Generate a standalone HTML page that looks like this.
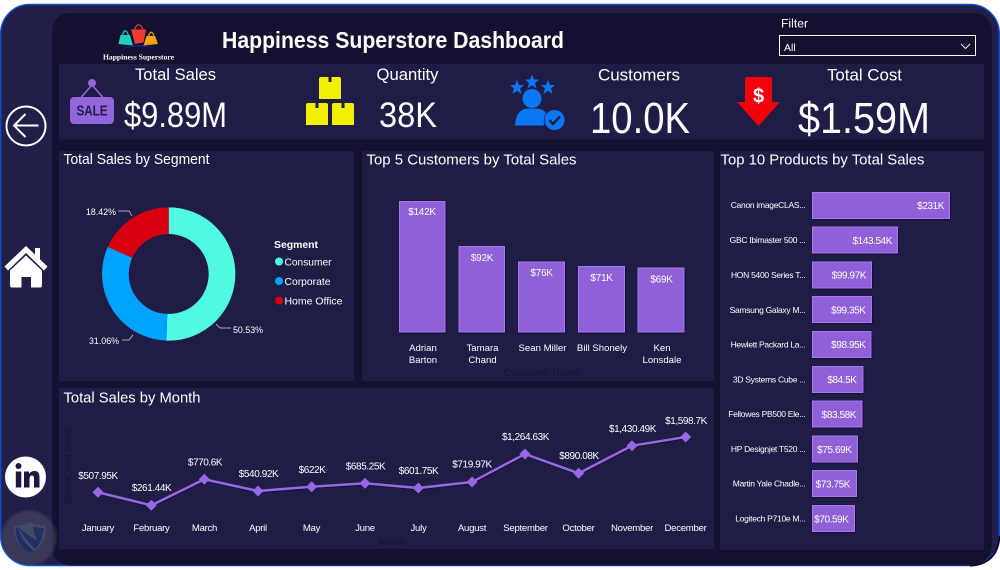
<!DOCTYPE html>
<html>
<head>
<meta charset="utf-8">
<title>Happiness Superstore Dashboard</title>
<style>
html,body{margin:0;padding:0;background:#fff;width:1000px;height:570px;overflow:hidden}
svg{display:block}
text{font-family:"Liberation Sans",sans-serif;fill:#fff}
.lb{font-size:9.5px}
.pl{font-size:8.5px;text-anchor:end;letter-spacing:-.28px}
.pv{font-size:10px;text-anchor:end;letter-spacing:-.42px}
.mv{font-size:10px;text-anchor:middle;letter-spacing:-.42px}
.mm{font-size:9.6px;text-anchor:middle;letter-spacing:-.28px}
.cv{font-size:9.6px;text-anchor:middle}
.cn{font-size:10px;text-anchor:middle;letter-spacing:-.3px}
.h{font-size:14.5px}
.kh{font-size:16.5px;text-anchor:middle}
.bar{fill:#9061d8;stroke:#a678f2;stroke-width:1}
</style>
</head>
<body>
<svg width="1000" height="570" viewBox="0 0 1000 570" xmlns="http://www.w3.org/2000/svg">
<defs>
<filter id="sh" x="-10%" y="-10%" width="120%" height="120%"><feDropShadow dx="0.5" dy="0.5" stdDeviation="0.6" flood-color="#07061c" flood-opacity="1"/></filter>
<filter id="bl" x="-20%" y="-20%" width="140%" height="140%"><feGaussianBlur stdDeviation="1.2"/></filter>
</defs>
<rect width="1000" height="570" fill="#fff"/>
<!-- frame -->
<rect x="0.7" y="4.5" width="998.6" height="561" rx="29" fill="#211e4a" stroke="#0a50cc" stroke-width="1.4"/>
<path d="M72 13H972Q992 13 992 33V540Q992 565.500 966 565.500H72Q52 565.500 52 545V33Q52 13 72 13Z" fill="#13112f"/>
<path d="M970 565.800Q998 564 999.600 536" fill="none" stroke="#050418" stroke-width="1.600"/>
<!-- panels -->
<rect x="59" y="64" width="925" height="75.500" fill="#1f1c46"/>
<rect x="59" y="151" width="295" height="230" rx="1" fill="#1f1c46"/>
<rect x="362" y="151" width="352" height="230" rx="1" fill="#1f1c46"/>
<rect x="720" y="151" width="264" height="399" rx="1" fill="#1f1c46"/>
<rect x="59" y="388" width="655" height="161" rx="1" fill="#1f1c46"/>

<!-- logo -->
<path d="M120.500 35H130L133 45.500L118.500 44Z" fill="#25cdbd"/>
<path d="M122.500 35Q125 26.500 128.500 35" fill="none" stroke="#25cdbd" stroke-width="1.200"/>
<path d="M131 29.500H146L143.500 42.500L135 44Z" fill="#ee3d2f"/>
<path d="M134.500 29.500Q138.500 20 143 29.500" fill="none" stroke="#ee3d2f" stroke-width="1.200"/>
<path d="M146.500 36H155L158 44L143.500 45.500Z" fill="#f5a30f"/>
<path d="M148.500 36Q151.500 28.500 154 36" fill="none" stroke="#f5a30f" stroke-width="1.200"/>
<path d="M121 49Q139 41.500 156 48.500Q139 44.500 121 49Z" fill="#152a8c"/>
<text x="103" y="59.500" textLength="71" lengthAdjust="spacingAndGlyphs" style="font-family:'Liberation Serif',serif;font-weight:bold;font-size:7.400px">Happiness Superstore</text>

<!-- title -->
<text x="222" y="48" textLength="342" lengthAdjust="spacingAndGlyphs" style="font-size:23px;font-weight:bold">Happiness Superstore Dashboard</text>

<!-- filter -->
<text x="781" y="27.500" textLength="27" lengthAdjust="spacingAndGlyphs" style="font-size:11.500px">Filter</text>
<rect x="779.500" y="35.500" width="196" height="20" fill="#13112f" stroke="#fff" stroke-width="1"/>
<text x="784" y="51" style="font-size:10.500px">All</text>
<path d="M961 44L965.500 48.500L970 44" fill="none" stroke="#fff" stroke-width="0.900"/>

<!-- KPI text -->
<text class="kh" x="175.500" y="80" textLength="81" lengthAdjust="spacingAndGlyphs">Total Sales</text>
<text x="124" y="127" textLength="103" lengthAdjust="spacingAndGlyphs" style="font-size:35px">$9.89M</text>
<text class="kh" x="407.500" y="80" textLength="62" lengthAdjust="spacingAndGlyphs">Quantity</text>
<text x="379" y="127" textLength="58" lengthAdjust="spacingAndGlyphs" style="font-size:35px">38K</text>
<text class="kh" x="639" y="80.500" textLength="82" lengthAdjust="spacingAndGlyphs">Customers</text>
<text x="590" y="133" textLength="100" lengthAdjust="spacingAndGlyphs" style="font-size:44px">10.0K</text>
<text class="kh" x="864.500" y="80.500" textLength="75" lengthAdjust="spacingAndGlyphs">Total Cost</text>
<text x="798" y="133" textLength="132" lengthAdjust="spacingAndGlyphs" style="font-size:44px">$1.59M</text>

<!-- SALE icon -->
<circle cx="92" cy="83" r="4" fill="#9366dc"/>
<path d="M92 85L80.500 98M92 85L103.500 98" stroke="#9366dc" stroke-width="1.600" fill="none"/>
<rect x="70" y="97" width="44" height="27" rx="4" fill="#9366dc"/>
<text x="92" y="115.500" text-anchor="middle" textLength="31" lengthAdjust="spacingAndGlyphs" style="font-size:14.500px;font-weight:bold;fill:#1f1c46">SALE</text>

<!-- boxes -->
<g fill="#f0f000">
<path d="M319 79Q319 77 321 77H328.500V82H331.500V77H339Q341 77 341 79V99H319Z"/>
<path d="M306 105Q306 103 308 103H315.500V108H318.500V103H326Q328 103 328 105V125H306Z"/>
<path d="M332 105Q332 103 334 103H341.500V108H344.500V103H352Q354 103 354 105V125H332Z"/>
</g>

<!-- customer icon -->
<g fill="#0a78f5">
<path d="M517 80L519 85H524L520 88.500L521.500 94L517 90.800L512.500 94L514 88.500L510 85H515Z"/>
<path d="M532 74.500L534 79.500H539L535 83L536.500 88.500L532 85.300L527.500 88.500L529 83L525 79.500H530Z"/>
<path d="M548 80L550 85H555L551 88.500L552.500 94L548 90.800L543.500 94L545 88.500L541 85H546Z"/>
<circle cx="532" cy="98.500" r="9.500"/>
<path d="M515 125.500Q516 109 528 108.500H536Q544 109 546 113Q543 118 544 125.500Z"/>
<circle cx="554.500" cy="120" r="10"/>
</g>
<path d="M549.500 120L553 124L560 116.500" fill="none" stroke="#1f1c46" stroke-width="2.400"/>

<!-- cost arrow -->
<path d="M745 79Q745 77 747 77H770Q772 77 772 79V102H780L758.500 126L737 102H745Z" fill="#f40009"/>
<text x="758.500" y="102.500" text-anchor="middle" style="font-size:20px;font-weight:bold">$</text>

<!-- side nav -->
<circle cx="26" cy="126" r="19.500" fill="none" stroke="#fff" stroke-width="2"/>
<path d="M38.500 125.500H15M25.500 114L14 125.500L25.500 137" fill="none" stroke="#fff" stroke-width="2"/>
<path d="M26 246L47.500 266.500L44 270.500L26 253L8 270.500L4.500 266.500Z" fill="#fff"/>
<rect x="35" y="248" width="5" height="12" fill="#fff"/>
<path d="M26 255.500L42 270.500V285.500Q42 287.500 40 287.500H31V277H21.500V287.500H12Q10 287.500 10 285.500V270.500Z" fill="#fff"/>
<circle cx="25.500" cy="477" r="20.500" fill="#fff"/>
<g fill="#1a1740">
<circle cx="18.500" cy="466" r="3"/>
<rect x="15.800" y="471.500" width="5.500" height="16"/>
<path d="M24 471.500H29V473.800Q31 471 34.500 471Q39.500 471 39.500 477.500V487.500H34V478.500Q34 475.500 32 475.500Q29.500 475.500 29.500 478.500V487.500H24Z"/>
</g>

<!-- segment panel -->
<text class="h" x="63.500" y="164" textLength="146" lengthAdjust="spacingAndGlyphs">Total Sales by Segment</text>
<g fill="none" stroke-width="26.700" transform="rotate(-90 168.700 274)">
<circle cx="168.700" cy="274" r="53.300" stroke="#4ffce2" stroke-dasharray="169.200 334.900"/>
<circle cx="168.700" cy="274" r="53.300" stroke="#00a4ff" stroke-dasharray="104 334.900" stroke-dashoffset="-169.200"/>
<circle cx="168.700" cy="274" r="53.300" stroke="#d9000f" stroke-dasharray="61.700 334.900" stroke-dashoffset="-273.200"/>
</g>
<path d="M118 211H129L132 216M216 324L220 328H231M133 335L129 340H122" fill="none" stroke="#d8d8e4" stroke-width="0.700"/>
<text class="lb" x="86" y="215" textLength="30" lengthAdjust="spacingAndGlyphs">18.42%</text>
<text class="lb" x="233" y="333" textLength="30" lengthAdjust="spacingAndGlyphs">50.53%</text>
<text class="lb" x="89" y="344" textLength="30" lengthAdjust="spacingAndGlyphs">31.06%</text>
<text x="274" y="248" textLength="44" lengthAdjust="spacingAndGlyphs" style="font-size:10px;font-weight:bold">Segment</text>
<circle cx="279" cy="261.500" r="4" fill="#4ffce2"/>
<circle cx="279" cy="281" r="4" fill="#00a4ff"/>
<circle cx="279" cy="300.500" r="4" fill="#d9000f"/>
<text x="284.500" y="265.500" textLength="47" lengthAdjust="spacingAndGlyphs" style="font-size:10.500px">Consumer</text>
<text x="284.500" y="285" textLength="46" lengthAdjust="spacingAndGlyphs" style="font-size:10.500px">Corporate</text>
<text x="284.500" y="304.500" textLength="58" lengthAdjust="spacingAndGlyphs" style="font-size:10.500px">Home Office</text>

<!-- top 5 -->
<text class="h" x="366.500" y="164.500" textLength="210" lengthAdjust="spacingAndGlyphs">Top 5 Customers by Total Sales</text>
<g filter="url(#sh)">
<rect class="bar" x="399.500" y="201.500" width="45.500" height="130.500"/>
<rect class="bar" x="459" y="246.500" width="45.500" height="85.500"/>
<rect class="bar" x="518.500" y="262" width="46" height="70"/>
<rect class="bar" x="578.500" y="266.500" width="46" height="65.500"/>
<rect class="bar" x="638" y="268" width="46" height="64"/>
</g>
<text class="cn" x="422" y="215">$142K</text>
<text class="cn" x="482" y="261">$92K</text>
<text class="cn" x="541.500" y="276">$76K</text>
<text class="cn" x="601.500" y="281">$71K</text>
<text class="cn" x="661.500" y="282.500">$69K</text>
<text class="cv" x="423" y="351">Adrian</text><text class="cv" x="423" y="363">Barton</text>
<text class="cv" x="482.500" y="351">Tamara</text><text class="cv" x="482.500" y="363">Chand</text>
<text class="cv" x="542.500" y="351">Sean Miller</text>
<text class="cv" x="602" y="351">Bill Shonely</text>
<text class="cv" x="662" y="351">Ken</text><text class="cv" x="662" y="363">Lonsdale</text>
<text x="542" y="376" text-anchor="middle" style="font-size:10.500px;fill:#17152f">Customer Name</text>

<!-- top 10 -->
<text class="h" x="720.500" y="164.500" textLength="204" lengthAdjust="spacingAndGlyphs">Top 10 Products by Total Sales</text>
<g filter="url(#sh)">
<rect class="bar" x="812.500" y="192.500" width="137" height="26"/>
<rect class="bar" x="812.500" y="227" width="85" height="26"/>
<rect class="bar" x="812.500" y="262" width="59" height="26"/>
<rect class="bar" x="812.500" y="296.500" width="59" height="26"/>
<rect class="bar" x="812.500" y="331.500" width="58.500" height="26"/>
<rect class="bar" x="812.500" y="366.500" width="50.500" height="26"/>
<rect class="bar" x="812.500" y="401" width="49.500" height="26"/>
<rect class="bar" x="812.500" y="436" width="45" height="26"/>
<rect class="bar" x="812.500" y="470.500" width="44" height="26"/>
<rect class="bar" x="812.500" y="505.500" width="42" height="26"/>
</g>
<text class="pl" x="805.500" y="208">Canon imageCLAS...</text>
<text class="pl" x="805.500" y="243">GBC Ibimaster 500 ...</text>
<text class="pl" x="805.500" y="278">HON 5400 Series T...</text>
<text class="pl" x="805.500" y="313">Samsung Galaxy M...</text>
<text class="pl" x="805.500" y="347.500">Hewlett Packard La...</text>
<text class="pl" x="805.500" y="382.500">3D Systems Cube ...</text>
<text class="pl" x="805.500" y="417">Fellowes PB500 Ele...</text>
<text class="pl" x="805.500" y="452">HP Designjet T520 ...</text>
<text class="pl" x="805.500" y="486.500">Martin Yale Chadle...</text>
<text class="pl" x="805.500" y="521.500">Logitech P710e M...</text>
<text class="pv" x="944" y="209">$231K</text>
<text class="pv" x="892" y="244">$143.54K</text>
<text class="pv" x="866" y="278.500">$99.97K</text>
<text class="pv" x="865.500" y="313.500">$99.35K</text>
<text class="pv" x="865.500" y="348">$98.95K</text>
<text class="pv" x="856.500" y="383">$84.5K</text>
<text class="pv" x="856" y="418">$83.58K</text>
<text class="pv" x="851.500" y="453">$75.69K</text>
<text class="pv" x="850" y="487.500">$73.75K</text>
<text class="pv" x="848.500" y="522.500">$70.59K</text>

<!-- month -->
<text class="h" x="63.500" y="402.500" textLength="137" lengthAdjust="spacingAndGlyphs">Total Sales by Month</text>
<text transform="translate(71 467) rotate(-90)" text-anchor="middle" style="font-size:9px;fill:#17152f">Sum of Total Sales</text>
<text x="392" y="545" text-anchor="middle" style="font-size:9px;fill:#17152f">Month</text>
<polyline points="98,492.300 151.300,505.300 204.300,479.300 258,491 311.700,486.700 365,483.300 418.300,488 472,482 525,454 578.700,473.300 632,445.700 685.700,437" fill="none" stroke="#9668e4" stroke-width="2.400" filter="url(#sh)"/>
<g fill="#9668e4">
<path d="M98 486.800l5.500 5.500l-5.500 5.500l-5.500-5.500Z"/>
<path d="M151.300 499.800l5.500 5.500l-5.500 5.500l-5.500-5.500Z"/>
<path d="M204.300 473.800l5.500 5.500l-5.500 5.500l-5.500-5.500Z"/>
<path d="M258 485.500l5.500 5.500l-5.500 5.500l-5.500-5.500Z"/>
<path d="M311.700 481.200l5.500 5.500l-5.500 5.500l-5.500-5.500Z"/>
<path d="M365 477.800l5.500 5.500l-5.500 5.500l-5.500-5.500Z"/>
<path d="M418.300 482.500l5.500 5.500l-5.500 5.500l-5.500-5.500Z"/>
<path d="M472 476.500l5.500 5.500l-5.500 5.500l-5.500-5.500Z"/>
<path d="M525 448.500l5.500 5.500l-5.500 5.500l-5.500-5.500Z"/>
<path d="M578.700 467.800l5.500 5.500l-5.500 5.500l-5.500-5.500Z"/>
<path d="M632 440.200l5.500 5.500l-5.500 5.500l-5.500-5.500Z"/>
<path d="M685.700 431.500l5.500 5.500l-5.500 5.500l-5.500-5.500Z"/>
</g>
<text class="mv" x="98" y="479">$507.95K</text>
<text class="mv" x="151.500" y="491">$261.44K</text>
<text class="mv" x="205" y="465.500">$770.6K</text>
<text class="mv" x="258.500" y="477">$540.92K</text>
<text class="mv" x="312" y="473">$622K</text>
<text class="mv" x="365.500" y="469.500">$685.25K</text>
<text class="mv" x="418.500" y="474">$601.75K</text>
<text class="mv" x="472" y="467.500">$719.97K</text>
<text class="mv" x="525.500" y="440">$1,264.63K</text>
<text class="mv" x="579" y="459">$890.08K</text>
<text class="mv" x="632.500" y="432">$1,430.49K</text>
<text class="mv" x="686" y="424">$1,598.7K</text>
<text class="mm" x="98" y="531">January</text>
<text class="mm" x="151.500" y="531">February</text>
<text class="mm" x="204.500" y="531">March</text>
<text class="mm" x="258" y="531">April</text>
<text class="mm" x="311.500" y="531">May</text>
<text class="mm" x="365" y="531">June</text>
<text class="mm" x="418.500" y="531">July</text>
<text class="mm" x="472" y="531">August</text>
<text class="mm" x="525.500" y="531">September</text>
<text class="mm" x="578.500" y="531">October</text>
<text class="mm" x="632" y="531">November</text>
<text class="mm" x="685.500" y="531">December</text>

<!-- watermark -->
<circle cx="29" cy="538" r="27.500" fill="#8e9a82" fill-opacity="0.22" filter="url(#bl)"/>
<path d="M29.500 522Q37 526 45.500 526Q47 545 30 553Q13 545 14 526Q22 526 29.500 522Z" fill="#46506a" fill-opacity="0.75"/>
<path d="M18 527Q21 541 34 551Q30 553 28 552Q16 545 15.500 528Z" fill="#1b2a62" fill-opacity=".9"/>
<path d="M18 527Q24 538 35 549Q42 543 44 528Q38 528 33 526Q34 536 38 541Q27 535 18 527Z" fill="#1b2a62" fill-opacity=".85"/>
</svg>
</body>
</html>
